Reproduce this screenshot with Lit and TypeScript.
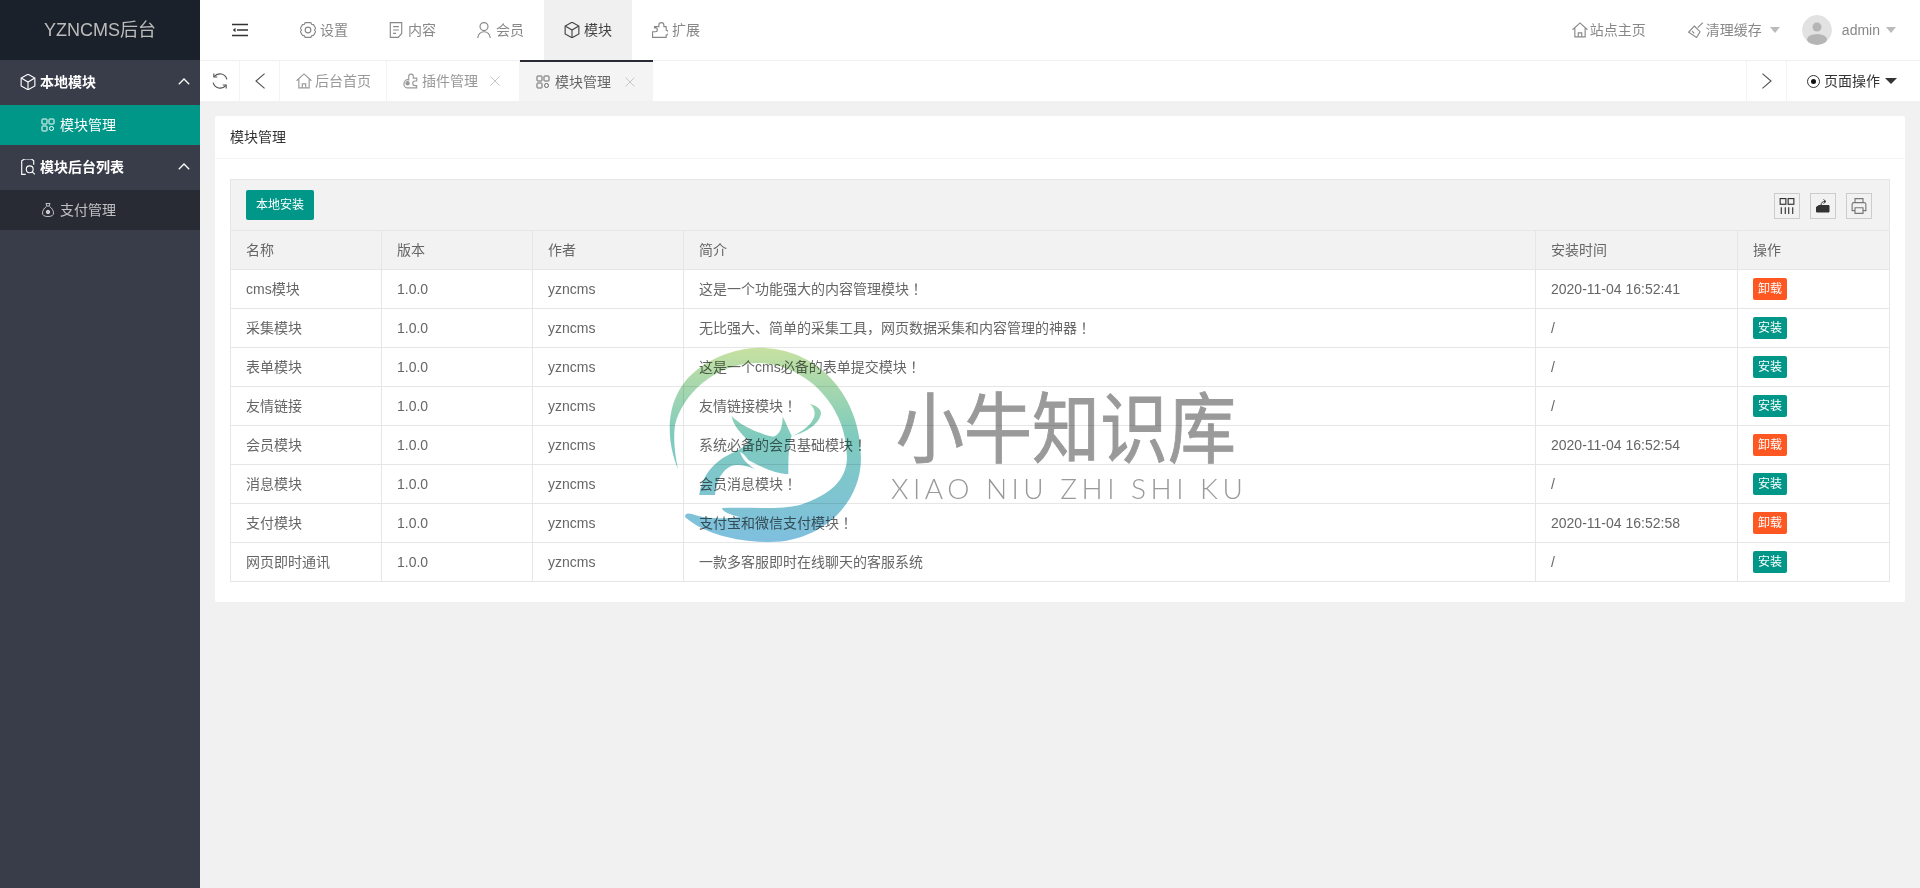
import { LitElement, css, html, svg } from "lit";
import { customElement } from "lit/decorators.js";

// line icons, drawn on a 16 box but shown through a 14 window so they fill their size
const icons: Record<string, unknown> = {
  cube: svg`<path d="M8 1.2 14 4.6v6.8L8 14.8 2 11.4V4.6z"/><path d="M2.4 4.8 8 8l5.6-3.2M8 8v6.4"/>`,
  gear: svg`<path d="M5.500 1.500h5l.6 1.500 1.700.3 1.900 3.200-1 1.500 1 1.500-1.900 3.200-1.700.3-.6 1.500h-5l-.6-1.500-1.700-.3-1.900-3.200 1-1.500-1-1.500 1.900-3.200 1.700-.3z"/><circle cx="8" cy="8" r="2.500"/>`,
  doc: svg`<path d="M3 1.500h10v9.500l-3 3.500H3z"/><path d="M5.500 5h5M5.500 8h5M5.500 11h2.500"/>`,
  user: svg`<circle cx="8" cy="5" r="3.500"/><path d="M2.500 15c.5-3.500 2.500-5.500 5.500-5.500s5 2 5.500 5.500"/>`,
  puzzle: svg`<path d="M1.500 14.500V9.500H4a1.700 1.700 0 0 0 0-3.400h-.8V5H7V3.800a2.200 2.200 0 0 1 4.400 0V5h2v3.200h.3a2.200 2.200 0 0 1 0 4.300h-.3v2z"/>`,
  home: svg`<path d="M1.500 7.800 8 1.800l6.500 6M3.500 6.500V14h9V6.500"/><path d="M6.500 14v-3.500h3V14"/>`,
  broom: svg`<path d="M14 1.500 9.500 6M6.500 4.500l5 5-3 5-7-4.500z"/><path d="M4.500 9l2 2"/>`,
  grid: svg`<rect x="2" y="2" width="5" height="5" rx=".6"/><rect x="9" y="2" width="5" height="5" rx=".6"/><rect x="2" y="9" width="5" height="5" rx=".6"/><rect x="9.500" y="9.500" width="4" height="4" rx="2"/>`,
  search: svg`<path d="M6 14.500H2.500v-12L5 1h6l2 1.500V6"/><circle cx="9.500" cy="10" r="3"/><path d="m11.800 12.300 2.200 2.200"/>`,
  money: svg`<path d="M6 1.500h4L9.200 4H6.800z"/><path d="M6.500 4.500C3.500 6.500 2.500 9 2.500 11c0 2.500 2 3.500 5.500 3.500s5.500-1 5.500-3.500c0-2-1-4.500-4-6.500"/><circle cx="8" cy="10" r="1.700" fill="currentColor"/>`,
  refresh: svg`<path d="M14 6.500A6.300 6.300 0 0 0 2.900 4.200M2 9.500a6.300 6.300 0 0 0 11.100 2.300"/><path d="M2.600 1.500v3h3M13.400 14.500v-3h-3"/>`,
  left: svg`<path d="M12 1.500 4.500 8l7.500 6.500"/>`,
  right: svg`<path d="m4 1.500 7.500 6.500L4 14.500"/>`,
  plug: svg`<path d="M8 2a2 2 0 0 1 2 2v1.500h3V8h-1.500a2 2 0 0 0 0 4H13v2H4.500A3 3 0 0 1 2 10a3 3 0 0 1 4-3V4a2 2 0 0 1 2-2z"/><circle cx="5" cy="10" r="1.400" fill="currentColor"/>`,
  columns: svg`<rect x="2" y="1.500" width="5" height="5"/><rect x="9" y="1.500" width="5" height="5"/><path d="M3 9v6M6.500 9v6M9.500 9v6M13 9v6"/>`,
  printer: svg`<path d="M4.500 5V1.500h7V5M4.500 12H2V6.500A1.500 1.500 0 0 1 3.500 5h9A1.500 1.500 0 0 1 14 6.500V12h-2.500"/><path d="M4.500 9.500h7v5h-7z"/>`,
};

const icon = (name: string, size = 16) =>
  html`<svg class="ico" width=${size} height=${size} viewBox="1 1 14 14">${icons[name]}</svg>`;

const chevronUp = () =>
  html`<svg class="ico chev" width="12" height="7" viewBox="0 0 12 7"><path d="M.8 6.300 6 1l5.200 5.300" /></svg>`;

const closeIcon = () =>
  html`<svg class="ico x" width="10" height="10" viewBox="0 0 10 10"><path d="m.5.500 9 9M9.500.500l-9 9" /></svg>`;

// the fullwidth bang sits centred in the reference, the SC font pushes it left
const withBang = (text: string) =>
  text.endsWith("！") ? html`${text.slice(0, -1)}<span class="fw">！</span>` : text;

type Row = { name: string; intro: string; time: string };

const rows: Row[] = [
  { name: "cms模块", intro: "这是一个功能强大的内容管理模块！", time: "2020-11-04 16:52:41" },
  { name: "采集模块", intro: "无比强大、简单的采集工具，网页数据采集和内容管理的神器！", time: "/" },
  { name: "表单模块", intro: "这是一个cms必备的表单提交模块！", time: "/" },
  { name: "友情链接", intro: "友情链接模块！", time: "/" },
  { name: "会员模块", intro: "系统必备的会员基础模块！", time: "2020-11-04 16:52:54" },
  { name: "消息模块", intro: "会员消息模块！", time: "/" },
  { name: "支付模块", intro: "支付宝和微信支付模块！", time: "2020-11-04 16:52:58" },
  { name: "网页即时通讯", intro: "一款多客服即时在线聊天的客服系统", time: "/" },
];

const navItems = [
  ["gear", "设置"],
  ["doc", "内容"],
  ["user", "会员"],
  ["cube", "模块"],
  ["puzzle", "扩展"],
];

@customElement("app-root")
export class AppRoot extends LitElement {
  static styles = css`
    :host {
      display: grid;
      grid-template-columns: 200px 1fr;
      height: 100vh;
      overflow: hidden;
      position: relative;
      font-family: "Liberation Sans", "Noto Sans CJK SC", sans-serif;
      font-size: 14px;
      line-height: 20px;
      color: #666;
      background: #f1f1f1;
    }
    .ico {
      fill: none;
      stroke: currentColor;
      stroke-width: 1;
      flex: none;
      display: block;
    }
    .fw {
      font-family: "Noto Sans CJK TC", sans-serif;
      line-height: 0;
    }

    /* sidebar */
    .side {
      background: #393d49;
      display: flex;
      flex-direction: column;
    }
    .logo {
      height: 60px;
      background: #1b212a;
      color: #bdbdbd;
      font-size: 18px;
      display: flex;
      align-items: center;
      justify-content: center;
    }
    .group {
      height: 45px;
      box-sizing: border-box;
      padding: 0 10px 2px 20px;
      display: flex;
      align-items: center;
      gap: 4px;
      color: #fff;
      font-weight: bold;
    }
    .group span {
      flex: 1;
    }
    .chev {
      stroke-width: 1.3;
    }
    .sub {
      height: 40px;
      padding-left: 41px;
      display: flex;
      align-items: center;
      gap: 5px;
      color: rgba(255, 255, 255, 0.7);
    }
    .sub.on {
      background: #009688;
      color: #fff;
    }
    .sub.dark {
      background: #282b33;
    }

    /* header */
    .main {
      display: flex;
      flex-direction: column;
      min-width: 0;
    }
    .top {
      height: 61px;
      box-sizing: border-box;
      background: #fff;
      border-bottom: 1px solid #f0f0f0;
      display: flex;
      align-items: stretch;
      color: #888;
      flex: none;
    }
    .burger {
      width: 80px;
      display: flex;
      align-items: center;
      justify-content: center;
      color: #333;
    }
    .nav {
      width: 88px;
      display: flex;
      align-items: center;
      justify-content: center;
      gap: 4px;
    }
    .nav.on {
      background: #f0f0f0;
      color: #444;
    }
    .spacer {
      flex: 1;
    }
    .right {
      display: flex;
      align-items: center;
      color: #888;
      padding-right: 24px;
    }
    .right .link {
      display: flex;
      align-items: center;
      gap: 2px;
    }
    .right .cache {
      margin-left: 42px;
    }
    .right .me {
      margin-left: 22px;
      gap: 10px;
    }
    .caret {
      width: 0;
      height: 0;
      border: 5px solid transparent;
      border-top: 6px solid #bbb;
      border-bottom: 0;
      margin-left: 6px;
    }
    .caret.black {
      border-top-color: #333;
      border-left-width: 6px;
      border-right-width: 6px;
      margin-left: 1px;
    }
    .avatar {
      width: 30px;
      height: 30px;
      border-radius: 50%;
      display: block;
      flex: none;
    }
    .me .name {
      display: flex;
      align-items: center;
    }

    /* tabs */
    .tabs {
      height: 40px;
      background: #fff;
      display: flex;
      flex: none;
      color: #999;
    }
    .tool {
      width: 40px;
      display: flex;
      align-items: center;
      justify-content: center;
      border-right: 1px solid #f4f4f4;
      color: #555;
      box-sizing: border-box;
    }
    .tool.next {
      width: 41px;
      border-left: 1px solid #f4f4f4;
    }
    .tab {
      display: flex;
      align-items: center;
      gap: 3px;
      padding-left: 16px;
      box-sizing: border-box;
      white-space: nowrap;
      border-right: 1px solid #f4f4f4;
    }
    .tab .x {
      margin-left: 9px;
      color: #c6c6c6;
    }
    .tab.home {
      width: 107px;
    }
    .tab.plug {
      width: 133px;
    }
    .tab.on {
      width: 133px;
      gap: 5px;
      background: #f4f4f4;
      color: #666;
      border-right: 0;
      border-top: 2px solid #292b34;
      margin-top: -1px;
    }
    .ops {
      width: 133px;
      box-sizing: border-box;
      display: flex;
      align-items: center;
      padding-left: 20px;
      gap: 4px;
      color: #333;
    }
    .ops .radio {
      width: 13px;
      height: 13px;
      box-sizing: border-box;
      border: 1px solid #333;
      border-radius: 50%;
      display: flex;
      align-items: center;
      justify-content: center;
    }
    .ops .radio::after {
      content: "";
      width: 5px;
      height: 5px;
      border-radius: 50%;
      background: #111;
    }

    /* content */
    .body {
      flex: 1;
      padding: 15px;
      min-height: 0;
    }
    .card {
      background: #fff;
      border-radius: 2px;
    }
    .card-head {
      height: 42px;
      line-height: 42px;
      padding: 0 15px;
      color: #333;
      border-bottom: 1px solid #f6f6f6;
    }
    .card-body {
      padding: 20px 15px;
    }
    .toolbar {
      height: 51px;
      box-sizing: border-box;
      background: #f2f2f2;
      border: 1px solid #e6e6e6;
      border-bottom: 0;
      padding: 10px 17px 0 15px;
      display: flex;
      justify-content: space-between;
    }
    .btn {
      width: 68px;
      height: 30px;
      line-height: 30px;
      text-align: center;
      font-size: 12px;
      color: #fff;
      background: #009688;
      border-radius: 2px;
    }
    .tools {
      display: flex;
      gap: 10px;
      margin-top: 3px;
    }
    .tools div {
      width: 26px;
      height: 26px;
      box-sizing: border-box;
      border: 1px solid #ccc;
      display: flex;
      align-items: center;
      justify-content: center;
      color: #333;
    }
    .tools div:last-child {
      color: #777;
    }
    table {
      width: 100%;
      border-collapse: collapse;
      table-layout: fixed;
      color: #666;
    }
    th,
    td {
      height: 38px;
      padding: 0 15px;
      border: 1px solid #e6e6e6;
      text-align: left;
      font-weight: normal;
      box-sizing: content-box;
      white-space: nowrap;
    }
    th {
      background: #f2f2f2;
    }
    col.c0 {
      width: 151px;
    }
    col.c4 {
      width: 202px;
    }
    col.c5 {
      width: 152px;
    }
    .badge {
      display: inline-block;
      width: 34px;
      height: 22px;
      line-height: 22px;
      text-align: center;
      font-size: 12px;
      color: #fff;
      border-radius: 2px;
      background: #009688;
      vertical-align: middle;
    }
    .badge.off {
      background: #ff5722;
    }

    /* watermark image laid over the page */
    .mark {
      position: absolute;
      left: 660px;
      top: 345px;
      width: 600px;
      height: 200px;
      pointer-events: none;
      mix-blend-mode: multiply;
    }
    .mark svg {
      position: absolute;
      left: 0;
      top: 0;
    }
    .mark .cn {
      position: absolute;
      left: 236px;
      top: 40px;
      font-size: 68px;
      font-weight: 400;
      line-height: 90px;
      white-space: nowrap;
      color: #9a9a9a;
      -webkit-text-stroke: 0.8px #9a9a9a;
      transform: scaleY(1.13);
    }
    .mark .en {
      position: absolute;
      left: 231px;
      top: 128px;
      font-family: "Lato", sans-serif;
      font-weight: 300;
      font-size: 28px;
      line-height: 30px;
      letter-spacing: 4.500px;
      white-space: nowrap;
      color: #999;
    }
  `;

  render() {
    return html`
      <aside class="side">
        <div class="logo">YZNCMS后台</div>
        <div class="group">${icon("cube")}<span>本地模块</span>${chevronUp()}</div>
        <div class="sub on">${icon("grid", 14)}模块管理</div>
        <div class="group">${icon("search")}<span>模块后台列表</span>${chevronUp()}</div>
        <div class="sub dark">${icon("money", 14)}支付管理</div>
      </aside>
      <div class="main">
        <header class="top">
          <div class="burger">
            <svg class="ico" width="16" height="14" viewBox="0 0 16 14">
              <path d="M0 1.500h16M5 7h11M0 12.500h16" stroke-width="1.400" />
              <path d="M3.500 4.800 .8 7l2.700 2.200z" fill="currentColor" stroke="none" />
            </svg>
          </div>
          ${navItems.map(
            ([ic, label]) =>
              html`<div class="nav ${label === "模块" ? "on" : ""}">${icon(ic)}${label}</div>`
          )}
          <div class="spacer"></div>
          <div class="right">
            <div class="link">${icon("home")}站点主页</div>
            <div class="link cache">${icon("broom")}清理缓存<i class="caret"></i></div>
            <div class="link me">
              <svg class="avatar" viewBox="0 0 30 30">
                <circle cx="15" cy="15" r="15" fill="#e2e2e2" />
                <circle cx="15" cy="12" r="4.500" fill="#b5b5b5" />
                <ellipse cx="15" cy="24.500" rx="10" ry="5.500" fill="#b5b5b5" />
              </svg>
              <span class="name">admin<i class="caret"></i></span>
            </div>
          </div>
        </header>
        <nav class="tabs">
          <div class="tool">${icon("refresh")}</div>
          <div class="tool">${icon("left")}</div>
          <div class="tab home">${icon("home")}后台首页</div>
          <div class="tab plug">${icon("plug")}插件管理${closeIcon()}</div>
          <div class="tab on">${icon("grid", 14)}模块管理${closeIcon()}</div>
          <div class="spacer"></div>
          <div class="tool next">${icon("right")}</div>
          <div class="ops"><i class="radio"></i>页面操作<i class="caret black"></i></div>
        </nav>
        <main class="body">
          <section class="card">
            <div class="card-head">模块管理</div>
            <div class="card-body">
              <div class="toolbar">
                <div class="btn">本地安装</div>
                <div class="tools">
                  <div>${icon("columns")}</div>
                  <div>
                    <svg class="ico" width="16" height="16" viewBox="0 0 16 16">
                      <path d="M1.500 9 4 7.500h10V14H1.500z" fill="currentColor" />
                      <path d="M6 7.500C6 4.500 7.500 3.500 10 3.500M8.500 1.500l2.500 2-2.500 2" />
                    </svg>
                  </div>
                  <div>${icon("printer")}</div>
                </div>
              </div>
              <table>
                <colgroup>
                  <col class="c0" /><col class="c0" /><col class="c0" />
                  <col /><col class="c4" /><col class="c5" />
                </colgroup>
                <thead>
                  <tr>
                    <th>名称</th><th>版本</th><th>作者</th><th>简介</th><th>安装时间</th><th>操作</th>
                  </tr>
                </thead>
                <tbody>
                  ${rows.map((r) => {
                    const installed = r.time !== "/";
                    return html`<tr>
                      <td>${r.name}</td>
                      <td>1.0.0</td>
                      <td>yzncms</td>
                      <td>${withBang(r.intro)}</td>
                      <td>${r.time}</td>
                      <td><span class="badge ${installed ? "off" : ""}">${installed ? "卸载" : "安装"}</span></td>
                    </tr>`;
                  })}
                </tbody>
              </table>
            </div>
          </section>
        </main>
      </div>
      <div class="mark">
        <svg width="210" height="200" viewBox="0 0 630 600">
          <defs>
            <linearGradient id="wm" gradientUnits="userSpaceOnUse" x1="0" y1="0" x2="0" y2="600">
              <stop offset="0" stop-color="#c9e2a0" />
              <stop offset="0.45" stop-color="#7fcbbe" />
              <stop offset="1" stop-color="#7fbfe0" />
            </linearGradient>
          </defs>
          <path
            fill="url(#wm)"
            d="M54 372C12 270 18 144 114 72 186 18 270 6 315 9c165 9 288 147 288 330 0 141-123 252-273 252-90 0-195-21-255-75 0-12 9-12 21-9 39 15 99 15 144 9-30-6-54-18-54-27 84-3 174 6 234-9 90-30 141-75 141-144 0-156-126-282-270-282-126 0-225 96-246 186-6 45 0 90 9 132z"
          />
          <path
            fill="url(#wm)"
            d="M215 213c25 27 75 52 125 62 20-5 28-30 28-60 12 20 17 40 27 57-10 28-10 78-10 116-40-3-85-23-120-43-7-10-15-20-25-25 5 20 22 38 45 52-30-12-50-14-70-10-30 13-47 48-50 88h-47c7-55 42-100 97-125 30-15 55-25 47-40-17-20-42-40-47-72z"
          />
          <path
            fill="url(#wm)"
            d="M400 272c40-10 80-37 83-67 0-15-18-25-33-27 15 12 20 32 5 52-15 20-35 32-55 42z"
          />
        </svg>
        <div class="cn">小牛知识库</div>
        <div class="en">XIAO NIU ZHI SHI KU</div>
      </div>
    `;
  }
}
